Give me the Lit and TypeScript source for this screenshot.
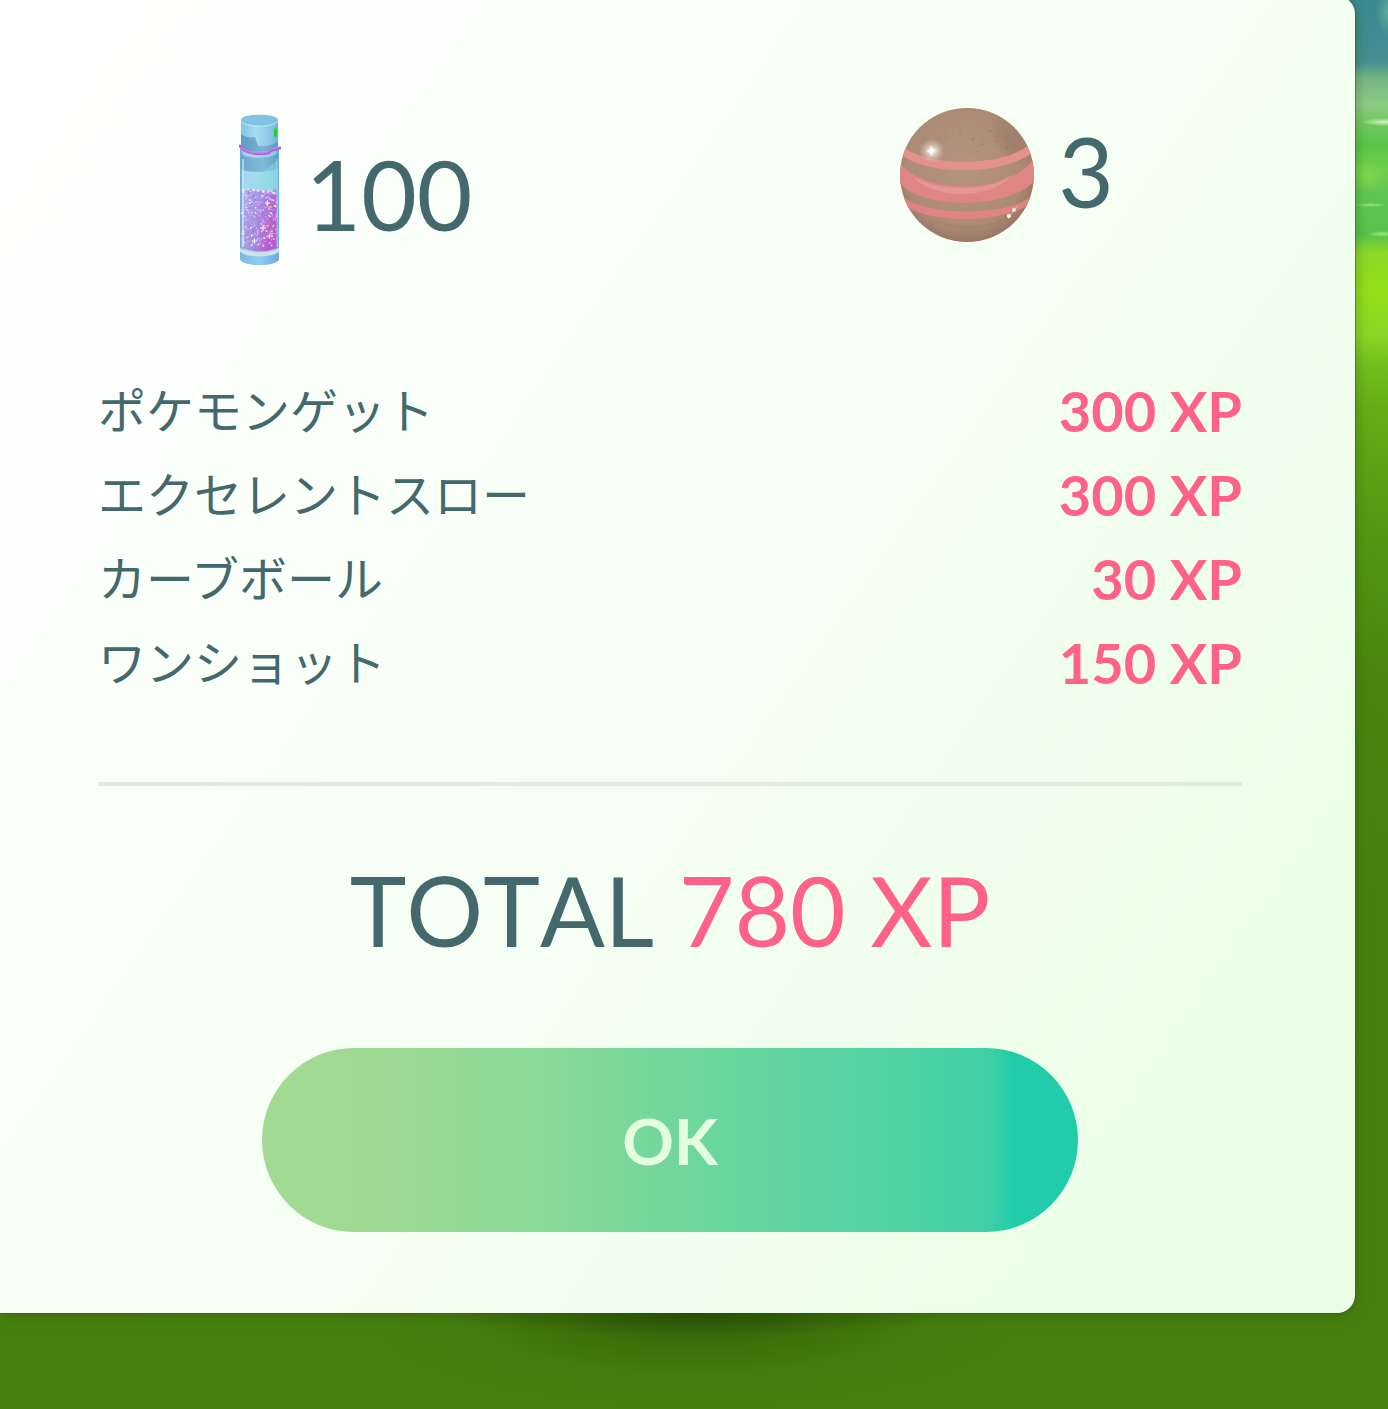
import { LitElement, html, css, svg } from "lit";
import { customElement } from "lit/decorators.js";

interface Bonus {
  label: string;
  xp: number;
}

const BONUSES: Bonus[] = [
  { label: "ポケモンゲット", xp: 300 },
  { label: "エクセレントスロー", xp: 300 },
  { label: "カーブボール", xp: 30 },
  { label: "ワンショット", xp: 150 },
];

const DUST_COLORS = ["#ffffff", "#e4cff9", "#9a86dc", "#c879dc", "#f3b5e3", "#8f9cea", "#ffc9c4", "#a861cf"];

/* Glitter grains inside the vial, spread by a small deterministic generator. */
function dustGrains() {
  let seed = 11;
  const next = () => {
    seed = (seed * 16807) % 2147483647;
    return seed / 2147483647;
  };
  return Array.from({ length: 360 }, () => {
    const x = 3 + next() * 35;
    const y = 91 + Math.pow(next(), 1.1) * 57;
    const size = 0.5 + next() * 0.6;
    const color = DUST_COLORS[Math.floor(next() * DUST_COLORS.length)];
    return svg`<circle cx=${x.toFixed(1)} cy=${y.toFixed(1)} r=${size.toFixed(1)} fill=${color} opacity=".8"></circle>`;
  });
}

@customElement("stardust-icon")
export class StardustIcon extends LitElement {
  static styles = css`
    :host { display: block; }
    svg { display: block; width: 42px; height: 188px; }
  `;

  render() {
    return html`
      <svg viewBox="0 1 42 188" aria-hidden="true">
        <defs>
          <linearGradient id="glass" x1="0" x2="1">
            <stop offset="0" stop-color="#6fa8dc"></stop>
            <stop offset=".12" stop-color="#a6d4ef"></stop>
            <stop offset=".45" stop-color="#a8dcec"></stop>
            <stop offset=".85" stop-color="#8dd2e4"></stop>
            <stop offset="1" stop-color="#68a9d8"></stop>
          </linearGradient>
          <linearGradient id="cap" x1="0" x2="1">
            <stop offset="0" stop-color="#84c3e2"></stop>
            <stop offset=".4" stop-color="#a5dcf0"></stop>
            <stop offset=".8" stop-color="#8cc6e4"></stop>
            <stop offset="1" stop-color="#72aed4"></stop>
          </linearGradient>
          <linearGradient id="band" x1="0" x2="1">
            <stop offset="0" stop-color="#5e9cc4"></stop>
            <stop offset=".6" stop-color="#7ab2d2"></stop>
            <stop offset="1" stop-color="#5c98c4"></stop>
          </linearGradient>
          <linearGradient id="dust" x1="0" x2="1" y1="0" y2=".4">
            <stop offset="0" stop-color="#a9b4f0"></stop>
            <stop offset=".5" stop-color="#a594e4"></stop>
            <stop offset="1" stop-color="#bb58cc"></stop>
          </linearGradient>
          <linearGradient id="foot" x1="0" x2="1">
            <stop offset="0" stop-color="#79b9e6"></stop>
            <stop offset=".5" stop-color="#92cdf0"></stop>
            <stop offset="1" stop-color="#6ea9dc"></stop>
          </linearGradient>
        </defs>
        <path d="M1 50 V160 C3 168 38 168 40 160 V50Z" fill="url(#glass)"></path>
        <path d="M2 55 C9 60 33 60 39 54 V69 C32 74 9 74 2 70Z" fill="url(#band)" opacity=".8"></path>
        <path d="M22 74 L38 62 V90 H8Z" fill="#8de0e6" opacity=".45"></path>
        <path d="M3 93 Q9 88 16 91 T29 92 L38 95 V149 Q21 156 3 149Z" fill="url(#dust)"></path>
        ${dustGrains()}
        <path d="M3 92 Q9 89 16 91 T30 93 L36 94" fill="none" stroke="#f4e6fb" stroke-width="2" stroke-dasharray="3 2" opacity=".8"></path>
        <path d="M26 104h5m-2.500-2.500v5M21 129h6m-3-3v6M13 142h5m-2.500-2.500v5M28 137h5m-2.500-2.500v5" stroke="#fff" stroke-width="1"></path>
        <path d="M29 108h4M27 127h3M30 135h4" stroke="#ff9ea8" stroke-width="2" opacity=".8"></path>
        <path d="M4 60 V148" stroke="#e3fbff" stroke-width="2" opacity=".55"></path>
        <path d="M38 60 V148" stroke="#d7f4ff" stroke-width="1" opacity=".6"></path>
        <path d="M1 149 C8 155 33 155 40 149 V153 C32 159 8 159 1 153Z" fill="#cfe4e8"></path>
        <path d="M1 153 C8 159 33 159 40 153 V160 C37 168 4 168 1 160Z" fill="url(#foot)"></path>
        <path d="M2 21 V48 C8 54 33 54 39 48 V21Z" fill="url(#cap)"></path>
        <path d="M2 35 C6 38 11 39 16 38 L19 47 C26 48 33 46 39 43 V49 C30 54 9 54 2 49Z" fill="url(#band)"></path>
        <path d="M2 21 C2 14 39 14 39 21 C39 28 2 28 2 21Z" fill="#83c1e5"></path>
        <path d="M2 22 C6 29 35 29 39 22" stroke="#bfe9f7" stroke-width="1" fill="none"></path>
        <path d="M35 30 l3 -1 v8 l-3 1z" fill="#19d233"></path>
        <path d="M1 47 C6 54 19 56 29 54 L33 51 L41 49" fill="none" stroke="#b064dc" stroke-width="3" stroke-linecap="round"></path>
        <path d="M2 48 C8 54 20 55 29 53 L33 50 L40 48" fill="none" stroke="#d08cef" stroke-width="1"></path>
      </svg>
    `;
  }
}

@customElement("candy-icon")
export class CandyIcon extends LitElement {
  static styles = css`
    :host { display: block; }
    svg { display: block; width: 136px; height: 142px; }
  `;

  render() {
    return html`
      <svg viewBox="-1 1 136 142" aria-hidden="true">
        <defs>
          <radialGradient id="body" cx=".48" cy=".45" r=".55">
            <stop offset="0" stop-color="#b59480"></stop>
            <stop offset=".8" stop-color="#ab8a76"></stop>
            <stop offset="1" stop-color="#9a7765"></stop>
          </radialGradient>
          <radialGradient id="shine">
            <stop offset="0" stop-color="#fff"></stop>
            <stop offset=".3" stop-color="#f4e6dc" stop-opacity=".8"></stop>
            <stop offset="1" stop-color="#d8bba8" stop-opacity="0"></stop>
          </radialGradient>
          <radialGradient id="shade">
            <stop offset="0" stop-color="#8a6f5c" stop-opacity=".5"></stop>
            <stop offset="1" stop-color="#8a6f5c" stop-opacity="0"></stop>
          </radialGradient>
          <clipPath id="ball"><circle cx="68" cy="76" r="67"></circle></clipPath>
        </defs>
        <circle cx="68" cy="76" r="67" fill="url(#body)"></circle>
        <g clip-path="url(#ball)">
          <ellipse cx="112" cy="42" rx="16" ry="30" fill="url(#shade)" transform="rotate(-35 112 42)"></ellipse>
          <path d="M4 48 C30 68 106 68 129 46 L134 53 C106 76 30 78 1 55Z" fill="#e3918f"></path>
          <path d="M0 63 C24 96 112 96 136 58 V81 C112 111 22 111 0 83Z" fill="#e08586"></path>
          <path d="M14 78 C42 93 92 93 112 76 C96 100 36 102 14 78Z" fill="#e49797"></path>
          <path d="M2 96 C24 118 112 118 134 96 L131 104 C108 125 28 125 6 106Z" fill="#e08385"></path>
          <path d="M28 119 Q68 134 110 119 Q68 142 28 119Z" fill="#9a8069" opacity=".45"></path>
        </g>
        <ellipse cx="33" cy="52" rx="13" ry="12" fill="url(#shine)"></ellipse>
        <path d="M32 46 l2 4 4 1 -4 2 -1 5 -2 -4 -4 -2 4 -2z" fill="#fff" opacity=".7"></path>
        <circle cx="110" cy="117" r="2" fill="#fff"></circle>
        <circle cx="115" cy="111" r="2" fill="#fbe4dc"></circle>
        <path d="M109 120 L118 107" stroke="#f5d8ce" stroke-width="1" opacity=".5"></path>
        <g fill="#8b6a57" opacity=".5">
          <circle cx="74" cy="40" r="1"></circle><circle cx="83" cy="45" r="1"></circle>
          <circle cx="77" cy="53" r="1"></circle><circle cx="98" cy="42" r="1"></circle>
          <circle cx="61" cy="32" r="1"></circle><circle cx="91" cy="32" r="1"></circle>
          <circle cx="108" cy="49" r="1"></circle><circle cx="47" cy="37" r="1"></circle>
        </g>
      </svg>
    `;
  }
}

@customElement("app-root")
export class AppRoot extends LitElement {
  static styles = css`
    :host {
      display: block;
      font-family: Lato, "Noto Sans CJK JP", sans-serif;
      color: #44696c;
    }
    .page {
      display: flex;
      flex-direction: column;
      min-height: 100vh;
      overflow: hidden;
      background:
        radial-gradient(ellipse 24px 4px at calc(100% - 4px) 122px, rgba(222, 250, 196, 0.9), rgba(222, 250, 196, 0) 100%),
        radial-gradient(ellipse 16px 2px at calc(100% - 18px) 205px, rgba(178, 240, 150, 0.8), rgba(178, 240, 150, 0) 100%),
        radial-gradient(ellipse 16px 3px at calc(100% - 6px) 234px, rgba(178, 240, 150, 0.8), rgba(178, 240, 150, 0) 100%),
        radial-gradient(ellipse 12px 24px at 100% 12px, rgba(104, 180, 160, 0.8), rgba(104, 180, 160, 0) 100%),
        radial-gradient(ellipse 16px 16px at calc(100% - 20px) 176px, rgba(138, 218, 72, 0.7), rgba(138, 218, 72, 0) 100%),
        linear-gradient(#3a8a90 0, #3f8c92 32px, #478f90 62px, #75b584 78px, #8bcb83 104px,
          #70c860 124px, #59c64a 145px, #70cf4c 170px, #5fc552 195px, #58c24c 235px,
          #8bd827 252px, #94de18 290px, #8ad626 335px, #70bf1d 365px, #62ad17 410px,
          #559a12 520px, #4a850f 680px, #47800f 900px, #47800f 100%);
    }
    .card {
      box-sizing: border-box;
      margin: -4px 33px 0 0;
      padding: 104px 113px 81px 98px;
      border-radius: 0 18px 18px 0;
      background: linear-gradient(125deg, #ffffff 0%, #fbfffa 28%, #f5fff3 55%, #edffe9 82%, #eaffe6 100%);
      box-shadow: 0 0 1px 1px rgba(60, 90, 50, 0.5), 0 2px 14px rgba(40, 70, 0, 0.4);
    }
    .rewards {
      display: grid;
      grid-template-columns: 1fr 1fr;
      column-gap: 178px;
      justify-items: center;
      align-items: start;
      margin: 0;
      padding: 0 0 0 22px;
      list-style: none;
    }
    .reward {
      display: flex;
      align-items: center;
      gap: 24px;
      font-size: 96px;
      line-height: 96px;
    }
    .bonuses {
      width: 100%;
      margin-top: 81px;
      border-collapse: collapse;
    }
    .bonus { height: 84px; }
    .label, .xp {
      padding: 0;
      vertical-align: middle;
    }
    .label {
      text-align: left;
      font-size: 48px;
      line-height: 72px;
      font-weight: 400;
    }
    .xp {
      text-align: right;
      font-size: 56px;
      line-height: 72px;
      font-weight: 700;
      color: #ff6289;
    }
    .divider {
      height: 4px;
      margin: 77px 0 76px;
      border: 0;
      background: #e2e9e1;
    }
    .total {
      margin: 0;
      text-align: center;
      font-size: 96px;
      line-height: 96px;
      font-kerning: none;
    }
    .amount { color: #ff6289; }
    .ok {
      display: block;
      width: 100%;
      max-width: 816px;
      height: 184px;
      margin: 90px auto 0;
      padding: 2px 0 0;
      border: 0;
      border-radius: 92px;
      background: linear-gradient(90deg, #a2da93 0%, #a0da92 12%, #8cd997 32%, #6ad69d 56%, #4fd2a3 78%, #40d0a5 89%, #22ccaa 92%, #22ccaa 100%);
      color: #e4ffdd;
      font: 700 64px/80px Lato, sans-serif;
      cursor: pointer;
    }
    .ground {
      flex: 1;
      min-height: 96px;
      background:
        radial-gradient(ellipse 260px 24px at 50% 0, rgba(34, 64, 0, 0.5) 0%, rgba(34, 64, 0, 0.25) 50%, rgba(34, 64, 0, 0) 100%),
        radial-gradient(ellipse 330px 92px at 50% 0, rgba(42, 86, 4, 0.8) 0%, rgba(48, 94, 6, 0.5) 35%, rgba(60, 116, 10, 0.25) 70%, rgba(66, 124, 12, 0) 100%);
    }
  `;

  render() {
    const total = BONUSES.reduce((sum, bonus) => sum + bonus.xp, 0);
    return html`
      <div class="page">
        <main class="card">
          <ul class="rewards">
            <li class="reward"><stardust-icon></stardust-icon><span>100</span></li>
            <li class="reward"><candy-icon></candy-icon><span>3</span></li>
          </ul>
          <table class="bonuses" lang="ja">
            <tbody>
              ${BONUSES.map(
                (bonus) => html`
                  <tr class="bonus">
                    <th class="label" scope="row">${bonus.label}</th>
                    <td class="xp">${bonus.xp} XP</td>
                  </tr>
                `,
              )}
            </tbody>
          </table>
          <hr class="divider" />
          <p class="total">TOTAL <span class="amount">${total} XP</span></p>
          <button class="ok" type="button">OK</button>
        </main>
        <div class="ground"></div>
      </div>
    `;
  }
}
